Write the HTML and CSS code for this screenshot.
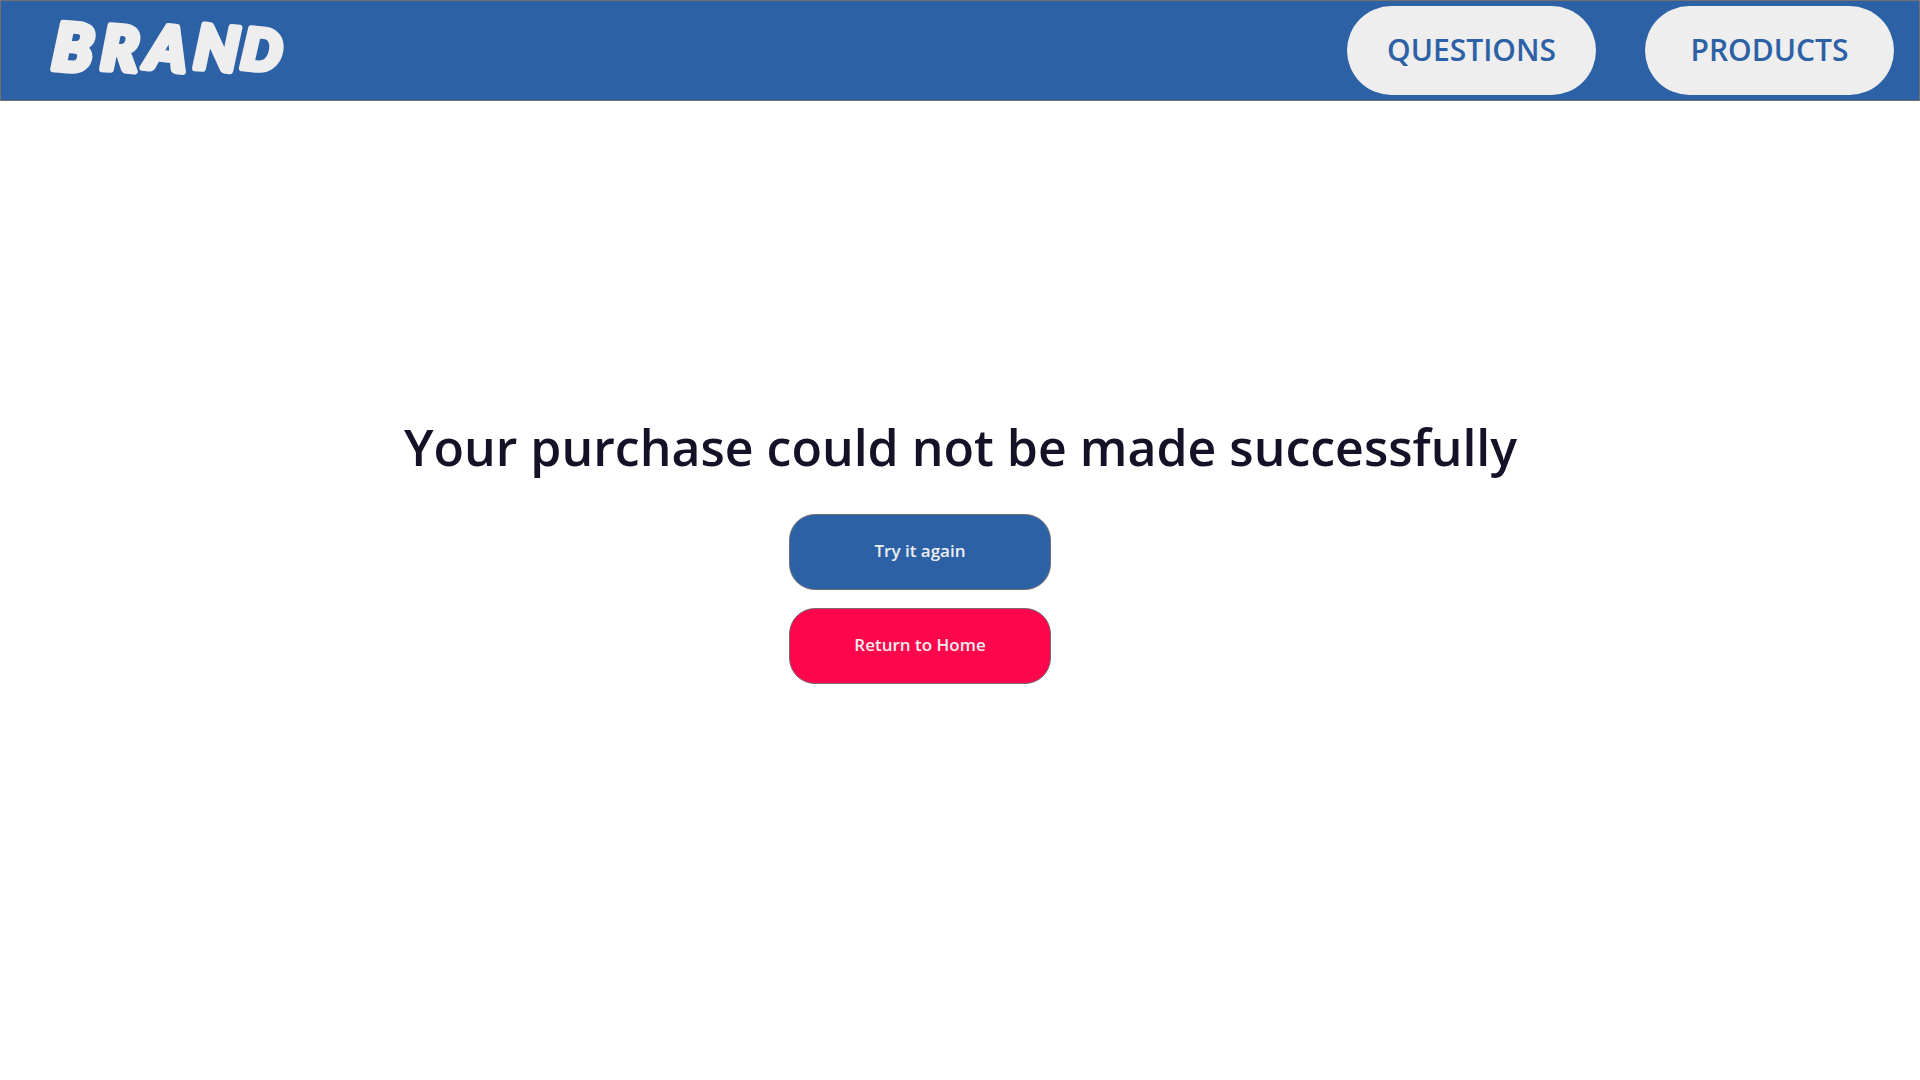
FILE: index.html
```html
<!DOCTYPE html>
<html lang="en">
<head>
<meta charset="utf-8">
<title>Purchase not completed</title>
<link rel="stylesheet" href="styles.css">
</head>
<body>
<header class="header">
  <svg class="brand" width="250" height="80" viewBox="0 0 250 80" role="img" aria-label="BRAND">
    <text class="brand-text" rotate="5 4 6 5 6"><tspan class="brand-wide" x="11" y="58">B</tspan><tspan x="60" y="58">R</tspan><tspan x="105" y="57">A</tspan><tspan x="153" y="57">N</tspan><tspan class="brand-narrow" x="200" y="57">D</tspan></text>
  </svg>
  <nav class="nav">
    <a class="nav-link">QUESTIONS</a>
    <a class="nav-link">PRODUCTS</a>
  </nav>
</header>
<main class="main">
  <h1 class="title">Your purchase could not be made successfully</h1>
  <div class="actions">
    <button class="button button-retry">Try it again</button>
    <button class="button button-home">Return to Home</button>
  </div>
</main>
</body>
</html>
```
FILE: styles.css
```css
* { box-sizing: border-box; }

body {
  margin: 0;
  min-height: 100vh;
  background: #fff;
  font-family: "Open Sans", sans-serif;
}

.header {
  display: flex;
  justify-content: space-between;
  align-items: center;
  height: 101px;
  padding: 0 25px 0 39px;
  background: #2d61a6;
  border: 1px solid #707070;
}

.brand { overflow: visible; }

.brand-text {
  font: italic 900 61px Lato, sans-serif;
  fill: #eee;
  stroke: #eee;
  stroke-width: 6px;
  stroke-linejoin: round;
}

.brand-wide { font-size: 65px; }

.brand-narrow { font-size: 56px; }

.nav {
  display: flex;
  gap: 49px;
}

.nav-link {
  display: flex;
  align-items: center;
  justify-content: center;
  width: 249px;
  height: 89px;
  padding-bottom: 2px;
  border-radius: 45px;
  background: #eee;
  color: #2d61a6;
  font-size: 30px;
  font-weight: 600;
}

.main {
  display: flex;
  flex-direction: column;
  align-items: center;
  padding-top: 312px;
}

.title {
  margin: 0 0 33px 1px;
  color: #151127;
  font-size: 50px;
  font-weight: 600;
  line-height: 68px;
  white-space: nowrap;
}

.actions {
  display: flex;
  flex-direction: column;
  gap: 18px;
  margin-right: 80px;
}

.button {
  width: 262px;
  height: 76px;
  padding: 0 0 3px;
  border: 1px solid #707070;
  border-radius: 26px;
  color: #eee;
  font-family: inherit;
  font-size: 17px;
  font-weight: 600;
}

.button-retry { background: #2d61a6; }

.button-home { background: #ff054c; }
```
